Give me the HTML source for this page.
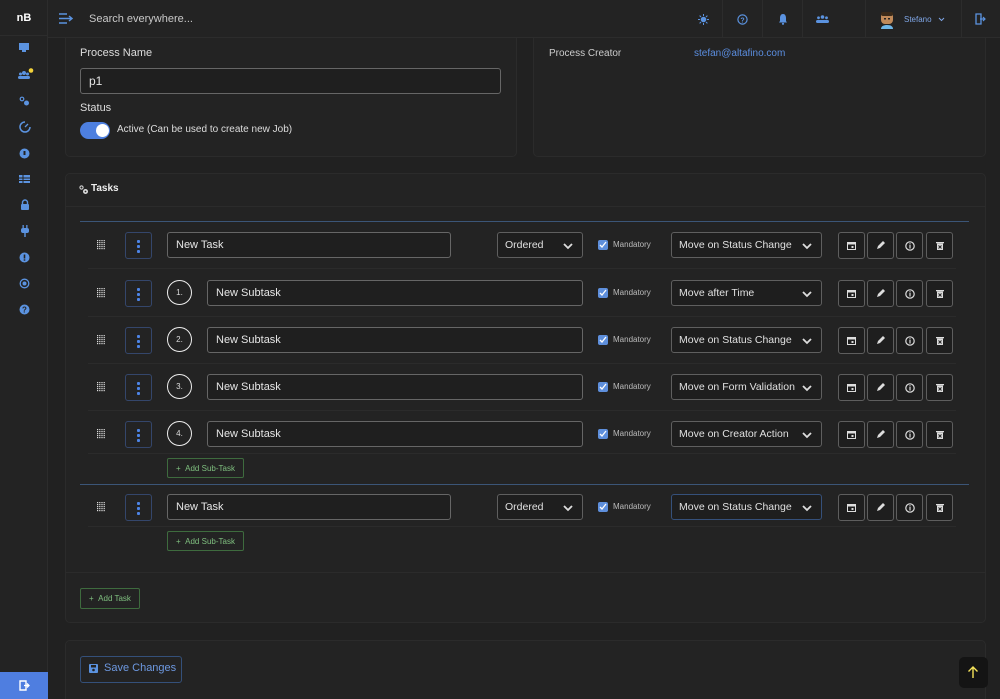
<!DOCTYPE html>
<html><head><meta charset="utf-8">
<style>
*{box-sizing:border-box;margin:0;padding:0}
html,body{width:1000px;height:699px;overflow:hidden}
body{background:#212121;font-family:"Liberation Sans",sans-serif;color:#ddd;position:relative;font-size:11px}
.a{position:absolute}
.side{left:0;top:0;width:48px;height:699px;background:#232323;border-right:1px solid #2c2c2c;z-index:5}
.top{left:48px;top:0;width:952px;height:38px;background:#232323;border-bottom:1px solid #2c2c2c;z-index:5}
.z{z-index:6}
.card{background:#232323;border:1px solid #2b2b2b;border-radius:5px}
.inp{border:1px solid #666;border-radius:3px;background:#1f1f1f;color:#e6e6e6;font-size:11px;padding-left:8px;display:flex;align-items:center}
.sel{border:1px solid #5f5f5f;border-radius:3px;background:#1e1e1e;color:#e0e0e0;font-size:10.5px;padding-left:7px;display:flex;align-items:center;white-space:nowrap}
.sel svg{position:absolute;right:9px;top:10px}
.kb{width:27px;height:27px;border:1px solid #34466b;border-radius:3px}
.kb i{position:absolute;left:11px;width:3px;height:3px;background:#4d84e6;border-radius:1px}
.ab{width:27px;height:27px;border:1px solid #5e5e5e;border-radius:3px;background:#1e1e1e;display:flex;align-items:center;justify-content:center}
.cb{width:10px;height:10px;background:#5e8fdc;border-radius:2px}
.mand{font-size:8px;color:#bbb}
.circ{width:25px;height:25px;border:1.5px solid #eee;border-radius:50%;font-size:8px;color:#ddd;display:flex;align-items:center;justify-content:center}
.sep{height:1px;background:#2b2b2b}
.gbtn{border:1px solid #3e6b3e;border-radius:2px;color:#7fbf7f;font-size:8px;display:flex;align-items:center;justify-content:center}
.tb{top:0;width:1px;height:38px;background:#2c2c2c;z-index:6}
</style></head><body>
<!-- top cards -->
<div class="a card" style="left:65px;top:26px;width:452px;height:131px;border-radius:0 0 5px 5px"></div>
<div class="a card" style="left:533px;top:26px;width:453px;height:131px;border-radius:0 0 5px 5px"></div>

<div class="a side"></div>
<div class="a z" style="left:0;top:0;width:48px;height:36px;border-bottom:1px solid #2c2c2c;color:#fff;font-weight:bold;font-size:11px;text-align:center;line-height:36px">nB</div>
<svg class="a z" style="left:18px;top:42px" width="12" height="11"><rect x="1" y="1" width="10" height="7" fill="#5b93e0"/><rect x="4" y="8" width="4" height="2" fill="#5b93e0"/></svg>
<svg class="a z" style="left:18px;top:68px" width="16" height="12"><circle cx="6" cy="5" r="2" fill="#5b93e0"/><circle cx="2.5" cy="6" r="1.5" fill="#5b93e0"/><circle cx="9.5" cy="6" r="1.5" fill="#5b93e0"/><rect x="0" y="8" width="12" height="3" rx="1.5" fill="#5b93e0"/><circle cx="13" cy="2.5" r="2.3" fill="#f3d23a"/></svg>
<svg class="a z" style="left:19px;top:96px" width="12" height="11"><circle cx="3" cy="3" r="1.8" fill="none" stroke="#5b93e0" stroke-width="1.2"/><circle cx="7.5" cy="7" r="2.5" fill="#5b93e0"/></svg>
<svg class="a z" style="left:19px;top:121px" width="12" height="12"><path d="M6 1A5 5 0 1 0 11 6" fill="none" stroke="#5b93e0" stroke-width="1.5"/><path d="M6 6L9 3" stroke="#5b93e0" stroke-width="1.3"/></svg>
<svg class="a z" style="left:19px;top:148px" width="11" height="11"><circle cx="5.5" cy="5.5" r="5" fill="#5b93e0"/><rect x="4.5" y="3" width="2" height="4" fill="#232323"/></svg>
<svg class="a z" style="left:19px;top:174px" width="11" height="10"><rect x="0" y="1" width="11" height="8" fill="#5b93e0"/><path d="M0 4h11M0 6.5h11M4 1v8" stroke="#232323"/></svg>
<svg class="a z" style="left:20px;top:199px" width="10" height="12"><path d="M2.5 5V3.5a2.5 2.5 0 0 1 5 0V5" fill="none" stroke="#5b93e0" stroke-width="1.4"/><rect x="1" y="5" width="8" height="6" rx="1" fill="#5b93e0"/></svg>
<svg class="a z" style="left:21px;top:225px" width="8" height="12"><rect x="0" y="3" width="8" height="5" rx="2" fill="#5b93e0"/><rect x="1.5" y="0" width="1.3" height="3" fill="#5b93e0"/><rect x="5.2" y="0" width="1.3" height="3" fill="#5b93e0"/><rect x="3.3" y="8" width="1.4" height="4" fill="#5b93e0"/></svg>
<svg class="a z" style="left:19px;top:252px" width="11" height="11"><circle cx="5.5" cy="5.5" r="5" fill="#5b93e0"/><rect x="4.7" y="2.5" width="1.6" height="4" fill="#232323"/><rect x="4.7" y="7.3" width="1.6" height="1.4" fill="#232323"/></svg>
<svg class="a z" style="left:19px;top:278px" width="11" height="11"><circle cx="5.5" cy="5.5" r="4.3" fill="none" stroke="#5b93e0" stroke-width="1.3"/><circle cx="5.5" cy="5.5" r="2" fill="#5b93e0"/></svg>
<svg class="a z" style="left:19px;top:304px" width="11" height="11"><circle cx="5.5" cy="5.5" r="5" fill="#5b93e0"/><text x="5.5" y="8.5" font-size="8" font-weight="bold" fill="#232323" text-anchor="middle" font-family="Liberation Sans">?</text></svg>
<div class="a z" style="left:0;top:672px;width:48px;height:27px;background:#4f7ee0"></div>
<svg class="a z" style="left:19px;top:680px" width="11" height="11"><path d="M1 1h6v9H1z" fill="none" stroke="#fff" stroke-width="1.4"/><path d="M5 5.5h5M8 3.5l2 2-2 2" stroke="#fff" stroke-width="1.3" fill="none"/></svg>

<div class="a top"></div>
<svg class="a z" style="left:59px;top:13px" width="14" height="11"><path d="M0 1h8M0 5.5h12M0 10h8M10 3l3 2.5-3 2.5" stroke="#5b93e0" stroke-width="1.4" fill="none"/></svg>
<div class="a z" style="left:89px;top:13px;font-size:11px;color:#c8c8c8">Search everywhere...</div>
<div class="a tb" style="left:722px"></div><div class="a tb" style="left:762px"></div><div class="a tb" style="left:802px"></div><div class="a tb" style="left:865px"></div><div class="a tb" style="left:961px"></div>
<svg class="a z" style="left:698px;top:14px" width="11" height="11"><circle cx="5.5" cy="5.5" r="2.8" fill="#5b93e0"/><path d="M5.5 0v2M5.5 9v2M0 5.5h2M9 5.5h2M1.6 1.6l1.4 1.4M8 8l1.4 1.4M1.6 9.4L3 8M8 3l1.4-1.4" stroke="#5b93e0"/></svg>
<svg class="a z" style="left:737px;top:14px" width="11" height="11"><circle cx="5.5" cy="5.5" r="4.6" fill="none" stroke="#5b93e0" stroke-width="1.2"/><text x="5.5" y="8.3" font-size="7" font-weight="bold" fill="#5b93e0" text-anchor="middle" font-family="Liberation Sans">?</text></svg>
<svg class="a z" style="left:778px;top:13px" width="10" height="12"><path d="M5 1C2.5 1 2 3.5 2 5v3L1 9.5h8L8 8V5C8 3.5 7.5 1 5 1z" fill="#5b93e0"/><circle cx="5" cy="10.8" r="1.1" fill="#5b93e0"/></svg>
<svg class="a z" style="left:816px;top:14px" width="13" height="10"><circle cx="6.5" cy="3" r="1.8" fill="#5b93e0"/><circle cx="2.5" cy="3.8" r="1.4" fill="#5b93e0"/><circle cx="10.5" cy="3.8" r="1.4" fill="#5b93e0"/><rect x="0" y="6" width="13" height="3" rx="1.5" fill="#5b93e0"/></svg>
<svg class="a z" style="left:878px;top:10px" width="18" height="20"><rect x="3" y="2" width="12" height="12" rx="4" fill="#c08a5a"/><rect x="3" y="2" width="12" height="4" rx="2" fill="#3a2a1a"/><rect x="6" y="8" width="2" height="1.5" fill="#222"/><rect x="10" y="8" width="2" height="1.5" fill="#222"/><path d="M3 19c0-3 3-4 6-4s6 1 6 4z" fill="#6fb7e8"/></svg>
<div class="a z" style="left:904px;top:15px;font-size:8px;color:#7fa6e6">Stefano</div>
<svg class="a z" style="left:938px;top:17px" width="7" height="5"><path d="M1 1l2.5 2.5L6 1" stroke="#7fa6e6" fill="none"/></svg>
<svg class="a z" style="left:975px;top:13px" width="11" height="12"><path d="M1 1h5v10H1z" fill="none" stroke="#5b93e0" stroke-width="1.3"/><path d="M5 6h5M8 4l2 2-2 2" stroke="#5b93e0" stroke-width="1.2" fill="none"/></svg>

<div class="a" style="left:80px;top:47px;font-size:11px;color:#ddd">Process Name</div>
<div class="a inp" style="left:80px;top:68px;width:421px;height:26px;font-size:12px">p1</div>
<div class="a" style="left:80px;top:102px;font-size:11px;color:#ddd">Status</div>
<div class="a" style="left:80px;top:122px;width:30px;height:17px;border-radius:9px;background:#4d7fe0"></div>
<div class="a" style="left:96px;top:124px;width:13px;height:13px;border-radius:50%;background:#fff"></div>
<div class="a" style="left:117px;top:124px;font-size:10px;color:#ddd">Active (Can be used to create new Job)</div>
<div class="a" style="left:549px;top:48px;font-size:10px;color:#ccc">Process Creator</div>
<div class="a" style="left:694px;top:48px;font-size:10px;color:#5b8ee0">stefan@altafino.com</div>

<!-- tasks card -->
<div class="a card" style="left:65px;top:173px;width:921px;height:450px"></div>
<div class="a" style="left:66px;top:206px;width:919px;height:1px;background:#2b2b2b"></div>
<svg class="a" style="left:79px;top:185px" width="10" height="10"><circle cx="2.5" cy="2.5" r="1.6" fill="none" stroke="#ddd"/><circle cx="6.5" cy="6.5" r="2.5" fill="#ddd"/><circle cx="6.5" cy="6.5" r="0.9" fill="#232323"/></svg>
<div class="a" style="left:91px;top:183px;font-size:10px;font-weight:bold;color:#eee">Tasks</div>
<div class="a" style="left:80px;top:221px;width:889px;height:1px;background:#3b5577"></div>
<div class="a" style="left:80px;top:484px;width:889px;height:1px;background:#3b5577"></div>

<div id="rows"></div>

<div class="a gbtn" style="left:167px;top:458px;width:77px;height:20px">+&nbsp;&nbsp;Add Sub-Task</div>
<div class="a gbtn" style="left:167px;top:531px;width:77px;height:20px">+&nbsp;&nbsp;Add Sub-Task</div>
<div class="a" style="left:66px;top:572px;width:919px;height:1px;background:#2b2b2b"></div>
<div class="a gbtn" style="left:80px;top:588px;width:60px;height:21px">+&nbsp;&nbsp;Add Task</div>

<div class="a card" style="left:65px;top:640px;width:921px;height:70px"></div>
<div class="a" style="left:80px;top:656px;width:102px;height:27px;border:1px solid #34507a;border-radius:3px"></div>
<svg class="a" style="left:89px;top:664px" width="9" height="9"><rect width="9" height="9" rx="1" fill="#5b93e0"/><rect x="2" y="1" width="5" height="2.5" fill="#232323"/><circle cx="4.5" cy="6" r="1.3" fill="#232323"/></svg>
<div class="a" style="left:104px;top:662px;font-size:11px;color:#6d98e0">Save Changes</div>
<div class="a" style="left:959px;top:657px;width:29px;height:31px;background:#141414;border-radius:5px"></div>
<svg class="a" style="left:967px;top:666px" width="12" height="13"><path d="M6 1v11M1.5 5.5L6 1l4.5 4.5" stroke="#f5e35a" stroke-width="1.4" fill="none"/></svg>

<script>
const chev='<svg width="10" height="7"><path d="M1 1l4 4 4-4" stroke="#ddd" stroke-width="1.8" fill="none"/></svg>';
let grip='<svg width="9" height="10">';for(let y=0;y<5;y++)for(let x=0;x<4;x++)grip+=`<rect x="${x*2.2}" y="${y*2}" width="1.2" height="1.2" fill="#ddd"/>`;grip+='</svg>';
const icons=[
'<svg width="9" height="9"><rect x="0.5" y="1.5" width="8" height="7" fill="none" stroke="#ddd"/><rect x="0.5" y="1.5" width="8" height="2" fill="#ddd"/><rect x="4.5" y="5" width="2" height="2" fill="#ddd"/></svg>',
'<svg width="9" height="9"><path d="M1 8l1-3 5-5 2 2-5 5z" fill="#ddd"/></svg>',
'<svg width="10" height="10"><circle cx="5" cy="5" r="4.2" fill="none" stroke="#ddd" stroke-width="1.2"/><rect x="4.4" y="4" width="1.2" height="3.5" fill="#ddd"/><rect x="4.4" y="2.3" width="1.2" height="1.1" fill="#ddd"/></svg>',
'<svg width="8" height="9"><rect x="0" y="1" width="8" height="1.3" fill="#ddd"/><rect x="1" y="2.5" width="6" height="6.5" fill="#ddd"/><path d="M2.5 4.5l3 3M5.5 4.5l-3 3" stroke="#232323"/></svg>'];
const rows=[
[245,'task','New Task','Ordered','Move on Status Change'],
[293,1,'New Subtask','','Move after Time'],
[340,2,'New Subtask','','Move on Status Change'],
[387,3,'New Subtask','','Move on Form Validation'],
[434,4,'New Subtask','','Move on Creator Action'],
[507,'task','New Task','Ordered','Move on Status Change',1]];
let h='';
for(const r of rows){const c=r[0],t=c-13;
h+=`<div class="a" style="left:97px;top:${c-5}px">${grip}</div>`;
h+=`<div class="a kb" style="left:125px;top:${t}px"><i style="top:7px"></i><i style="top:12px"></i><i style="top:17px"></i></div>`;
if(r[1]==='task'){
h+=`<div class="a inp" style="left:167px;top:${t}px;width:284px;height:26px">${r[2]}</div>`;
h+=`<div class="a sel" style="left:497px;top:${t}px;width:86px;height:26px">${r[3]}${chev}</div>`;
}else{
h+=`<div class="a circ" style="left:167px;top:${t}px">${r[1]}.</div>`;
h+=`<div class="a inp" style="left:207px;top:${t}px;width:376px;height:26px">${r[2]}</div>`;
}
h+=`<div class="a cb" style="left:598px;top:${c-5}px"></div><svg class="a" style="left:599px;top:${c-4}px" width="8" height="8"><path d="M1 4l2 2 4-5" stroke="#fff" stroke-width="1.3" fill="none"/></svg>`;
h+=`<div class="a mand" style="left:613px;top:${c-5}px">Mandatory</div>`;
h+=`<div class="a sel" style="left:671px;top:${t}px;width:151px;height:26px;${r[5]?'border-color:#35507a':''}">${r[4]}${chev}</div>`;
[838,867,896,926].forEach((x,i)=>{h+=`<div class="a ab" style="left:${x}px;top:${t}px">${icons[i]}</div>`});
h+=`<div class="a sep" style="left:88px;top:${(c===434||c===507)?c+19:c+23}px;width:868px"></div>`;
}
document.getElementById('rows').innerHTML=h;
</script>
</body></html>
